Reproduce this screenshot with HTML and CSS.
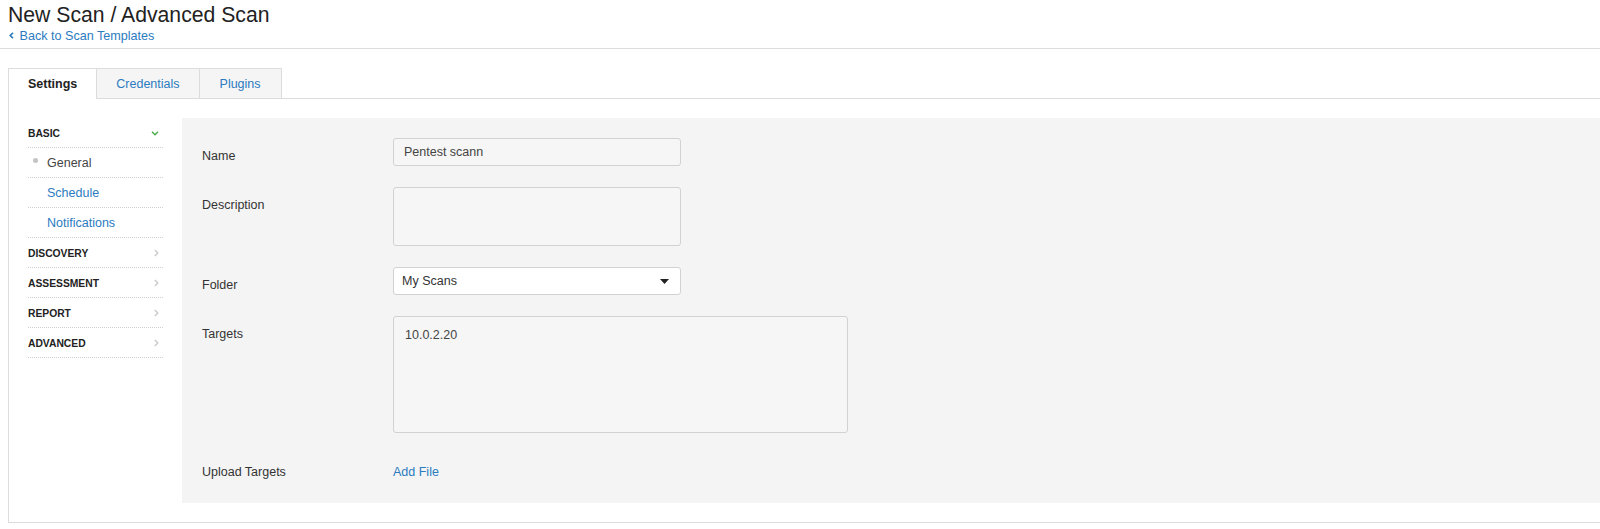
FILE: index.html
```html
<!DOCTYPE html>
<html lang="en">
<head>
    <meta charset="UTF-8">
    <title>New Scan / Advanced Scan</title>
    <link rel="stylesheet" href="styles.css">
</head>
<body>

    <!-- page header -->
    <div class="page-header">
        <h1>New Scan / Advanced Scan</h1>
        <a class="back-link" href="#">
            <svg width="5" height="7" viewBox="0 0 5 7"><path d="M4 0.8 L1.2 3.5 L4 6.2" fill="none" stroke="#2b7bbf" stroke-width="1.6"/></svg>
            Back to Scan Templates
        </a>
    </div>

    <!-- tabs -->
    <div class="tabs">
        <a class="tab active" href="#">Settings</a>
        <a class="tab" href="#">Credentials</a>
        <a class="tab" href="#">Plugins</a>
    </div>

    <div class="scan-body">
        <!-- left menu -->
        <div class="side-menu">
            <div class="side-row heading">
                <span>Basic</span>
                <svg width="8" height="5" viewBox="0 0 8 5"><path d="M1 0.8 L4 3.8 L7 0.8" fill="none" stroke="#4cae4c" stroke-width="1.5"/></svg>
            </div>
            <div class="side-row sub current"><span class="dot"></span>General</div>
            <div class="side-row sub"><a href="#">Schedule</a></div>
            <div class="side-row sub"><a href="#">Notifications</a></div>
            <div class="side-row heading">
                <span>Discovery</span>
                <svg width="5" height="8" viewBox="0 0 5 8"><path d="M0.8 1 L3.8 4 L0.8 7" fill="none" stroke="#c8c8c8" stroke-width="1.3"/></svg>
            </div>
            <div class="side-row heading">
                <span>Assessment</span>
                <svg width="5" height="8" viewBox="0 0 5 8"><path d="M0.8 1 L3.8 4 L0.8 7" fill="none" stroke="#c8c8c8" stroke-width="1.3"/></svg>
            </div>
            <div class="side-row heading">
                <span>Report</span>
                <svg width="5" height="8" viewBox="0 0 5 8"><path d="M0.8 1 L3.8 4 L0.8 7" fill="none" stroke="#c8c8c8" stroke-width="1.3"/></svg>
            </div>
            <div class="side-row heading">
                <span>Advanced</span>
                <svg width="5" height="8" viewBox="0 0 5 8"><path d="M0.8 1 L3.8 4 L0.8 7" fill="none" stroke="#c8c8c8" stroke-width="1.3"/></svg>
            </div>
        </div>

        <!-- form panel -->
        <div class="form-panel">
            <div class="form-row">
                <label class="form-label">Name</label>
                <input class="field" type="text" value="Pentest scann">
            </div>
            <div class="form-row">
                <label class="form-label">Description</label>
                <textarea class="field desc"></textarea>
            </div>
            <div class="form-row">
                <label class="form-label">Folder</label>
                <div class="select-wrap">
                    <select class="field select">
                        <option>My Scans</option>
                    </select>
                    <svg class="caret" width="9" height="5" viewBox="0 0 9 5"><path d="M0 0 L9 0 L4.5 5 Z" fill="#222"/></svg>
                </div>
            </div>
            <div class="form-row">
                <label class="form-label">Targets</label>
                <textarea class="field targets">10.0.2.20</textarea>
            </div>
            <div class="form-row last">
                <label class="form-label">Upload Targets</label>
                <a class="add-file" href="#">Add File</a>
            </div>
        </div>
    </div>

</body>
</html>
```

FILE: styles.css
```css
body {
    margin: 0;
    padding: 0;
    font-family: "Liberation Sans", Arial, sans-serif;
    font-size: 12.5px;
    color: #333;
    background-color: #fff;
    overflow: hidden;
}

a {
    color: #2b7bbf;
    text-decoration: none;
}

.page-header {
    padding: 3px 8px 4px;
    border-bottom: 1px solid #dcdcdc;
}

.page-header h1 {
    margin: 0;
    font-size: 21.2px;
    font-weight: normal;
    line-height: 24px;
    color: #222;
}

.back-link {
    display: block;
    font-size: 12.6px;
    line-height: 16px;
    margin-top: 1px;
}

.back-link svg {
    margin: 0 2px 1px 1px;
}

/* tabs */
.tabs {
    display: flex;
    margin: 19px 0 0 8px;
}

.tab {
    display: block;
    height: 28px;
    line-height: 28px;
    padding: 1px 19px 0;
    border-top: 1px solid #dcdcdc;
    border-left: 1px solid #dcdcdc;
    background-color: #f5f5f5;
    font-size: 12.5px;
}

.tab:last-child {
    border-right: 1px solid #dcdcdc;
    padding: 1px 20px 0;
}

.tab.active {
    position: relative;
    margin-bottom: -1px;
    height: 29px;
    padding: 1px 19px 0;
    background-color: #fff;
    color: #222;
    font-weight: bold;
}

.scan-body {
    display: flex;
    align-items: flex-start;
    margin-left: 8px;
    border-top: 1px solid #dcdcdc;
    border-left: 1px solid #dcdcdc;
    border-bottom: 1px solid #dcdcdc;
}

/* left menu */
.side-menu {
    width: 135px;
    margin: 19px 0 0 19px;
    flex-shrink: 0;
}

.side-row {
    display: flex;
    align-items: center;
    justify-content: space-between;
    height: 29px;
    border-bottom: 1px dotted #d0d0d0;
    padding-right: 4px;
}

.side-row.heading {
    font-size: 10.3px;
    font-weight: bold;
    text-transform: uppercase;
    color: #222;
    padding-top: 1px;
    height: 28px;
}

.side-row.sub {
    justify-content: flex-start;
    padding-left: 19px;
    font-size: 12.5px;
}

.side-row.current {
    color: #444;
    position: relative;
}

.dot {
    position: absolute;
    left: 5px;
    top: 10px;
    width: 5px;
    height: 5px;
    border-radius: 50%;
    background-color: #c4c4c4;
}

/* form */
.form-panel {
    flex: 1;
    margin: 19px 0 19px 19px;
    padding: 20px 20px 23px;
    background-color: #f4f4f4;
}

.form-row {
    display: flex;
    margin-bottom: 21px;
}

.form-row.last {
    margin-bottom: 0;
}

.form-label {
    width: 191px;
    flex-shrink: 0;
    padding-top: 10px;
    line-height: 16px;
    color: #333;
}

.field {
    box-sizing: border-box;
    width: 288px;
    height: 28px;
    margin: 0;
    padding: 0 10px;
    border: 1px solid #d2d2d2;
    border-radius: 3px;
    background-color: #f6f6f6;
    font-family: "Liberation Sans", Arial, sans-serif;
    font-size: 12.5px;
    color: #444;
    outline: none;
    resize: none;
}

.field.desc {
    height: 59px;
}

.field.targets {
    width: 455px;
    height: 117px;
    padding: 10px 11px;
    line-height: 16px;
}

.select-wrap {
    position: relative;
}

.field.select {
    -webkit-appearance: none;
    appearance: none;
    background-color: #fff;
    padding-left: 8px;
    color: #333;
}

.caret {
    position: absolute;
    right: 12px;
    top: 12px;
}

.add-file {
    padding-top: 10px;
    line-height: 16px;
}
```
